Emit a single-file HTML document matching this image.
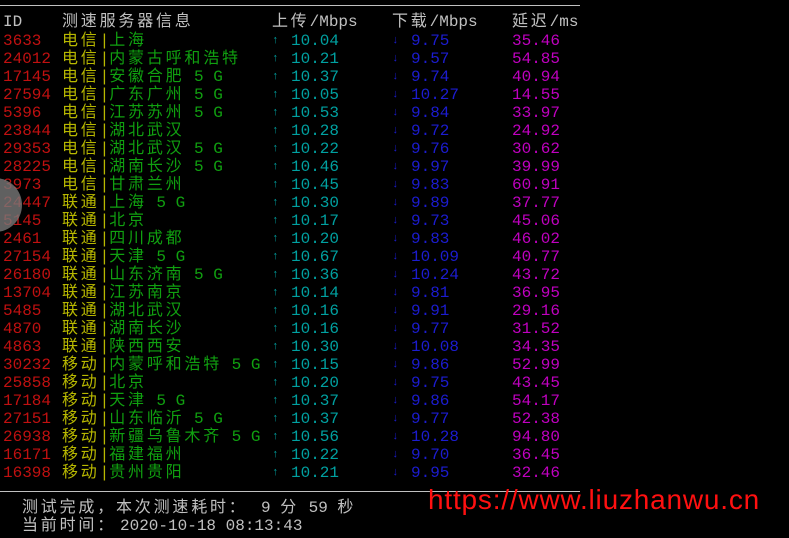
<!DOCTYPE html><html><head><meta charset="utf-8"><style>
body{margin:0;width:789px;height:538px;background:#000;overflow:hidden;position:relative;font-family:"Liberation Mono","Noto Sans CJK SC",monospace;font-size:16px;}
.r{position:absolute;left:0;height:18px;line-height:18px;white-space:pre;}
.r span{position:absolute;top:0;}
.c{letter-spacing:2.8px}
.id{left:3px;color:#c01010}
.p{left:62px;color:#b8b800}
.u{left:291px;color:#00a0a0}
.ua{left:272px;color:#00a0a0;font-size:11px}
.d{left:411px;color:#1c1cd0}
.da{left:392px;color:#1c1cd0;font-size:11px}
.l{left:512px;color:#c000c0}
.g{color:#10a010}
.h{color:#c0c0c0}
</style></head><body>
<div style="position:absolute;left:0;top:5px;width:580px;height:1px;background:#c0c0c0"></div>
<div class="r h" style="top:13px"><span style="left:3px">ID</span><span class="c" style="left:62px">测速服务器信息</span><span style="left:272px"><span class="c" style="position:static">上传</span>/Mbps</span><span style="left:392px"><span class="c" style="position:static">下载</span>/Mbps</span><span style="left:512px"><span class="c" style="position:static">延迟</span>/ms</span></div>
<div id="rows"></div>
<div style="position:absolute;left:-32px;top:178px;width:54px;height:54px;border-radius:50%;background:rgba(120,120,120,0.8)"></div>
<div style="position:absolute;left:0;top:491px;width:580px;height:1px;background:#c0c0c0"></div>
<div class="r h" style="top:499px;left:22px"><span class="c" style="left:0">测试完成，本次测速耗时：</span><span style="left:239px">9 <span class="c" style="position:static">分</span> 59 <span class="c" style="position:static">秒</span></span></div>
<div class="r h" style="top:517px;left:22px"><span class="c" style="left:0">当前时间：</span><span style="left:98px">2020-10-18 08:13:43</span></div>
<div style="position:absolute;left:428px;top:484px;color:#ff1010;font-family:'Liberation Sans',sans-serif;font-size:28px;letter-spacing:0.8px">https://www.liuzhanwu.cn</div>
<script>
var d=[["3633","电信","上海","10.04","9.75","35.46"],["24012","电信","内蒙古呼和浩特","10.21","9.57","54.85"],["17145","电信","安徽合肥 5 G","10.37","9.74","40.94"],["27594","电信","广东广州 5 G","10.05","10.27","14.55"],["5396","电信","江苏苏州 5 G","10.53","9.84","33.97"],["23844","电信","湖北武汉","10.28","9.72","24.92"],["29353","电信","湖北武汉 5 G","10.22","9.76","30.62"],["28225","电信","湖南长沙 5 G","10.46","9.97","39.99"],["3973","电信","甘肃兰州","10.45","9.83","60.91"],["24447","联通","上海 5 G","10.30","9.89","37.77"],["5145","联通","北京","10.17","9.73","45.06"],["2461","联通","四川成都","10.20","9.83","46.02"],["27154","联通","天津 5 G","10.67","10.09","40.77"],["26180","联通","山东济南 5 G","10.36","10.24","43.72"],["13704","联通","江苏南京","10.14","9.81","36.95"],["5485","联通","湖北武汉","10.16","9.91","29.16"],["4870","联通","湖南长沙","10.16","9.77","31.52"],["4863","联通","陕西西安","10.30","10.08","34.35"],["30232","移动","内蒙呼和浩特 5 G","10.15","9.86","52.99"],["25858","移动","北京","10.20","9.75","43.45"],["17184","移动","天津 5 G","10.37","9.86","54.17"],["27151","移动","山东临沂 5 G","10.37","9.77","52.38"],["26938","移动","新疆乌鲁木齐 5 G","10.56","10.28","94.80"],["16171","移动","福建福州","10.22","9.70","36.45"],["16398","移动","贵州贵阳","10.21","9.95","32.46"]];
var h="";d.forEach(function(r,i){var loc=r[2],g="";if(loc.indexOf(" 5 G")>=0){loc=loc.replace(" 5 G","");g=" 5 G";}
h+='<div class="r" style="top:'+(32+i*18)+'px"><span class="id">'+r[0]+'</span><span class="p"><span class="c" style="position:static">'+r[1]+'</span>|<span class="g c" style="position:static">'+loc+'</span><span class="g" style="position:static">'+g+'</span></span><span class="ua">↑</span><span class="u">'+r[3]+'</span><span class="da">↓</span><span class="d">'+r[4]+'</span><span class="l">'+r[5]+'</span></div>';});
document.getElementById("rows").innerHTML=h;
</script>
</body></html>
